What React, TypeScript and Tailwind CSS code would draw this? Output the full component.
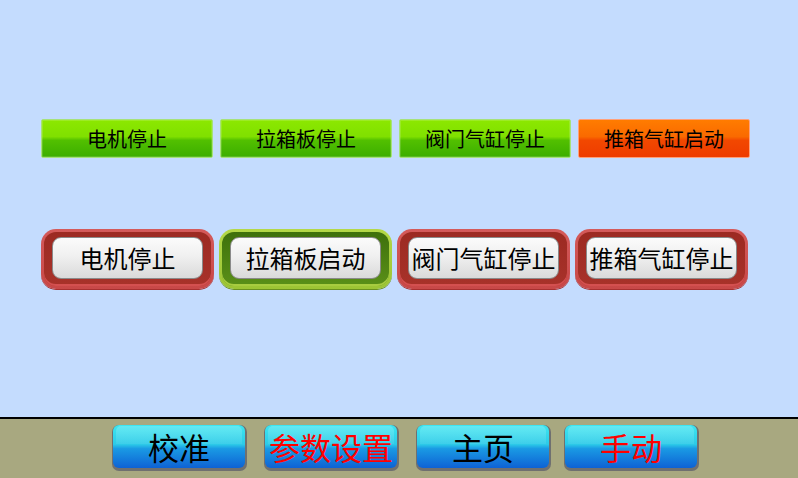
const cjk = { fontFamily: '"Noto Sans CJK SC", "Noto Sans", sans-serif' };

type Flat = { label: string; tone: 'green' | 'orange' };
type Framed = { label: string; tone: 'red' | 'green' };

const flatButtons: Flat[] = [
  { label: '电机停止', tone: 'green' },
  { label: '拉箱板停止', tone: 'green' },
  { label: '阀门气缸停止', tone: 'green' },
  { label: '推箱气缸启动', tone: 'orange' },
];

const framedButtons: Framed[] = [
  { label: '电机停止', tone: 'red' },
  { label: '拉箱板启动', tone: 'green' },
  { label: '阀门气缸停止', tone: 'red' },
  { label: '推箱气缸停止', tone: 'red' },
];

const navButtons = [
  { label: '校准', red: false, ml: 'ml-[112px]' },
  { label: '参数设置', red: true, ml: 'ml-[17px]' },
  { label: '主页', red: false, ml: 'ml-[17px]' },
  { label: '手动', red: true, ml: 'ml-[13px]' },
];

function FlatButton({ label, tone }: Flat) {
  const green = tone === 'green';
  return (
    <button
      className={
        green
          ? 'w-[172px] h-[39px] rounded-[2px] border border-[#a6e27a] bg-[linear-gradient(#8ce800_0%,#80e000_45%,#52c000_55%,#3cae00_100%)] shadow-[inset_0_0_0_1px_rgba(255,255,255,0.15)] flex items-center justify-center text-[20px] text-black'
          : 'w-[172px] h-[39px] rounded-[2px] border border-[#ffa07a] bg-[linear-gradient(#ff7c00_0%,#fa6a00_45%,#f24800_55%,#ee3c00_100%)] flex items-center justify-center text-[20px] text-black'
      }
      style={cjk}
    >
      {label}
    </button>
  );
}

function FramedButton({ label, tone }: Framed) {
  const red = tone === 'red';
  return (
    <div
      className={
        red
          ? 'w-[173px] h-[60px] rounded-[15px] p-[3px] bg-[linear-gradient(#d45a5a,#c84848)] shadow-[0_1px_0_#a83030]'
          : 'w-[173px] h-[60px] rounded-[15px] p-[3px] bg-[linear-gradient(#b4d848,#9cc434)] shadow-[0_1px_0_#6a9020]'
      }
    >
      <div
        className={
          red
            ? 'h-full rounded-[12px] pt-[5px] pb-[7px] px-[8px] bg-[linear-gradient(#9c2a22,#a8322a)] shadow-[inset_0_-2px_0_#d45050]'
            : 'h-full rounded-[12px] pt-[5px] pb-[7px] px-[8px] bg-[linear-gradient(#3e700c,#5a9018)] shadow-[inset_0_-2px_0_#a8cc40]'
        }
      >
        <div
          className="h-full rounded-[9px] border border-[#8a8a8a] bg-[linear-gradient(#fbfbfb_0%,#f0f0f0_45%,#dadada_100%)] flex items-center justify-center text-[24px] text-black leading-none"
          style={cjk}
        >
          {label}
        </div>
      </div>
    </div>
  );
}

export default function App() {
  return (
    <div className="w-[798px] h-[478px] flex flex-col overflow-hidden">
      <div className="h-[417px] bg-[#c4dcfe] pt-[119px] pl-[41px]">
        <div className="flex gap-[7px]">
          {flatButtons.map((b, i) => (
            <FlatButton key={i} {...b} />
          ))}
        </div>
        <div className="flex gap-[5px] mt-[71px]">
          {framedButtons.map((b, i) => (
            <FramedButton key={i} {...b} />
          ))}
        </div>
      </div>
      <div className="h-[2px] bg-black" />
      <div className="flex-1 bg-[#a8a880] pt-[6px] flex items-start">
        {navButtons.map((b, i) => (
          <div
            key={i}
            className={`${b.ml} w-[135px] h-[46px] rounded-[7px] bg-[#6f7070] pl-[1px] pr-[2px] pb-[3px]`}
          >
            <div className="relative h-full rounded-[6px] overflow-hidden bg-[linear-gradient(#3ee6f0_0%,#2ccae8_45%,#1a9ae4_55%,#0e62d4_100%)] flex items-center justify-center">
              <div className="absolute left-[3px] right-[3px] top-[1px] h-[18px] rounded-t-[5px] bg-[linear-gradient(rgba(255,255,255,0.2),rgba(255,255,255,0.08))]" />
              <span
                className={`relative text-[31px] leading-none ${b.red ? 'text-[#ff0000]' : 'text-black'}`}
                style={cjk}
              >
                {b.label}
              </span>
            </div>
          </div>
        ))}
      </div>
    </div>
  );
}
